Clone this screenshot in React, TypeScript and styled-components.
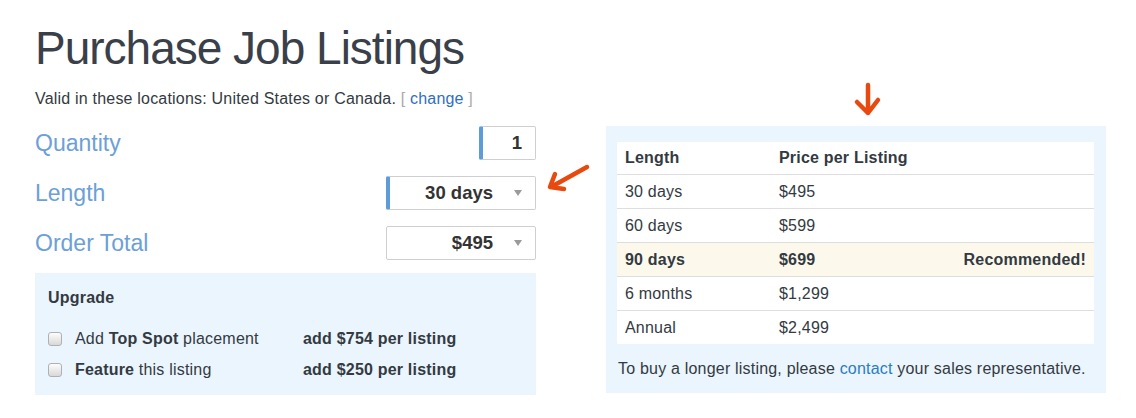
import React from "react";
import styled, { createGlobalStyle } from "styled-components";

const GlobalStyle = createGlobalStyle`
  body {
    margin: 0;
    background: #fff;
    font-family: "Liberation Sans", Arial, sans-serif;
    color: #333a42;
  }
`;

const Page = styled.div`
  position: relative;
  width: 1136px;
  height: 418px;
  padding: 22px 30px 0 35px;
  box-sizing: border-box;
`;

const Title = styled.h1`
  margin: 0;
  font-size: 46px;
  line-height: 52px;
  font-weight: 400;
  letter-spacing: -1px;
  color: #3a4049;
`;

const Subtitle = styled.p`
  margin: 15px 0 17px;
  font-size: 16px;
  letter-spacing: 0.2px;
  line-height: 20px;
`;

const Bracket = styled.span`
  color: #aaa;
`;

const Link = styled.a`
  color: ${(p: { $tone?: string }) => p.$tone || "#2f6fbf"};
  text-decoration: none;
`;

const Columns = styled.div`
  display: grid;
  grid-template-columns: 501px 500px;
  column-gap: 70px;
  align-items: start;
`;

const FormCol = styled.div`
  display: flex;
  flex-direction: column;
  gap: 16px;
`;

const FormRow = styled.div`
  display: flex;
  align-items: center;
  justify-content: space-between;
  height: 34px;
`;

const Label = styled.span`
  font-size: 23px;
  color: #6ca0d6;
`;

const Field = styled.div<{ $width: number; $active?: boolean }>`
  display: flex;
  align-items: center;
  justify-content: flex-end;
  box-sizing: border-box;
  width: ${(p) => p.$width}px;
  height: 34px;
  border: 1px solid #cfcfcf;
  border-left: ${(p) => (p.$active ? "4px solid #5c9cd8" : "1px solid #cfcfcf")};
  border-radius: 2px;
  background: #fff;
  font-size: 18.5px;
  font-weight: 700;
  color: #333;
  padding-right: 13px;
`;

const Caret = styled.span`
  width: 0;
  height: 0;
  margin-left: 21px;
  border-top: 6px solid #9a9a9a;
  border-left: 4.5px solid transparent;
  border-right: 4.5px solid transparent;
`;

const UpgradeBox = styled.div`
  margin-top: 13px;
  background: #ebf5fd;
  padding: 15px 13px 15px;
  font-size: 16px;
  letter-spacing: 0.2px;
  line-height: 20px;
`;

const UpgradeTitle = styled.div`
  font-weight: 700;
  margin-bottom: 21px;
`;

const UpgradeList = styled.div`
  display: grid;
  grid-template-columns: 27px 228px auto;
  row-gap: 11px;
  align-items: center;
`;

const Check = styled.input.attrs({ type: "checkbox" })`
  appearance: none;
  margin: 0;
  width: 14px;
  height: 14px;
  border: 1px solid #b0b0b0;
  border-radius: 3px;
  background: linear-gradient(#fdfdfd, #d8d8d8);
  box-sizing: border-box;
`;

const Price = styled.span`
  font-weight: 700;
`;

const Panel = styled.div`
  background: #ebf5fd;
  padding: 16px 12px 14px 11px;
`;

const Table = styled.table`
  width: 100%;
  border-collapse: collapse;
  background: #fff;
  font-size: 16px;
  letter-spacing: 0.2px;
`;

const Row = styled.tr<{ $highlight?: boolean }>`
  height: 34px;
  border-top: 1px solid #dedede;
  background: ${(p) => (p.$highlight ? "#fcf9ec" : "#fff")};
  font-weight: ${(p) => (p.$highlight ? 700 : 400)};
  &:first-child {
    border-top: none;
    height: 32px;
  }
`;

const Head = styled.th`
  text-align: left;
  font-weight: 700;
  padding: 1px 8px 0;
  &:first-child {
    width: 138px;
  }
`;

const Cell = styled.td<{ $right?: boolean }>`
  padding: 2px 8px 0;
  text-align: ${(p) => (p.$right ? "right" : "left")};
`;

const Footnote = styled.p`
  margin: 15px 0 0 1px;
  font-size: 16px;
  letter-spacing: 0.2px;
  line-height: 20px;
`;

const Arrow = styled.svg<{ $x: number; $y: number }>`
  position: absolute;
  left: ${(p) => p.$x}px;
  top: ${(p) => p.$y}px;
  overflow: visible;
`;

const prices = [
  { length: "30 days", price: "$495" },
  { length: "60 days", price: "$599" },
  { length: "90 days", price: "$699", note: "Recommended!" },
  { length: "6 months", price: "$1,299" },
  { length: "Annual", price: "$2,499" },
];

export default function App() {
  return (
    <Page>
      <GlobalStyle />
      <Title>Purchase Job Listings</Title>
      <Subtitle>
        Valid in these locations: United States or Canada. <Bracket>[</Bracket>{" "}
        <Link href="#">change</Link> <Bracket>]</Bracket>
      </Subtitle>

      <Columns>
        <div>
          <FormCol>
            <FormRow>
              <Label>Quantity</Label>
              <Field $width={57} $active>1</Field>
            </FormRow>
            <FormRow>
              <Label>Length</Label>
              <Field $width={150} $active>
                30 days<Caret />
              </Field>
            </FormRow>
            <FormRow>
              <Label>Order Total</Label>
              <Field $width={150}>
                $495<Caret />
              </Field>
            </FormRow>
          </FormCol>

          <UpgradeBox>
            <UpgradeTitle>Upgrade</UpgradeTitle>
            <UpgradeList>
              <Check />
              <span>
                Add <b>Top Spot</b> placement
              </span>
              <Price>add $754 per listing</Price>
              <Check />
              <span>
                <b>Feature</b> this listing
              </span>
              <Price>add $250 per listing</Price>
            </UpgradeList>
          </UpgradeBox>
        </div>

        <Panel>
          <Table>
            <tbody>
              <Row>
                <Head>Length</Head>
                <Head>Price per Listing</Head>
                <Head />
              </Row>
              {prices.map((p) => (
                <Row key={p.length} $highlight={!!p.note}>
                  <Cell>{p.length}</Cell>
                  <Cell>{p.price}</Cell>
                  <Cell $right>{p.note}</Cell>
                </Row>
              ))}
            </tbody>
          </Table>
          <Footnote>
            To buy a longer listing, please <Link href="#" $tone="#2a7cc4">contact</Link> your sales representative.
          </Footnote>
        </Panel>
      </Columns>

      <Arrow $x={544} $y={160} width="50" height="36" viewBox="0 0 50 36">
        <path d="M43 7 L7 27 M11 14 L6 27 L20 29" fill="none" stroke="#e8490f" strokeWidth="4.5" strokeLinecap="round" strokeLinejoin="round" />
      </Arrow>
      <Arrow $x={852} $y={80} width="30" height="38" viewBox="0 0 30 38">
        <path d="M16 5 L16 33 M5 22 L16 33 L26 20" fill="none" stroke="#e8490f" strokeWidth="4.5" strokeLinecap="round" strokeLinejoin="round" />
      </Arrow>
    </Page>
  );
}
